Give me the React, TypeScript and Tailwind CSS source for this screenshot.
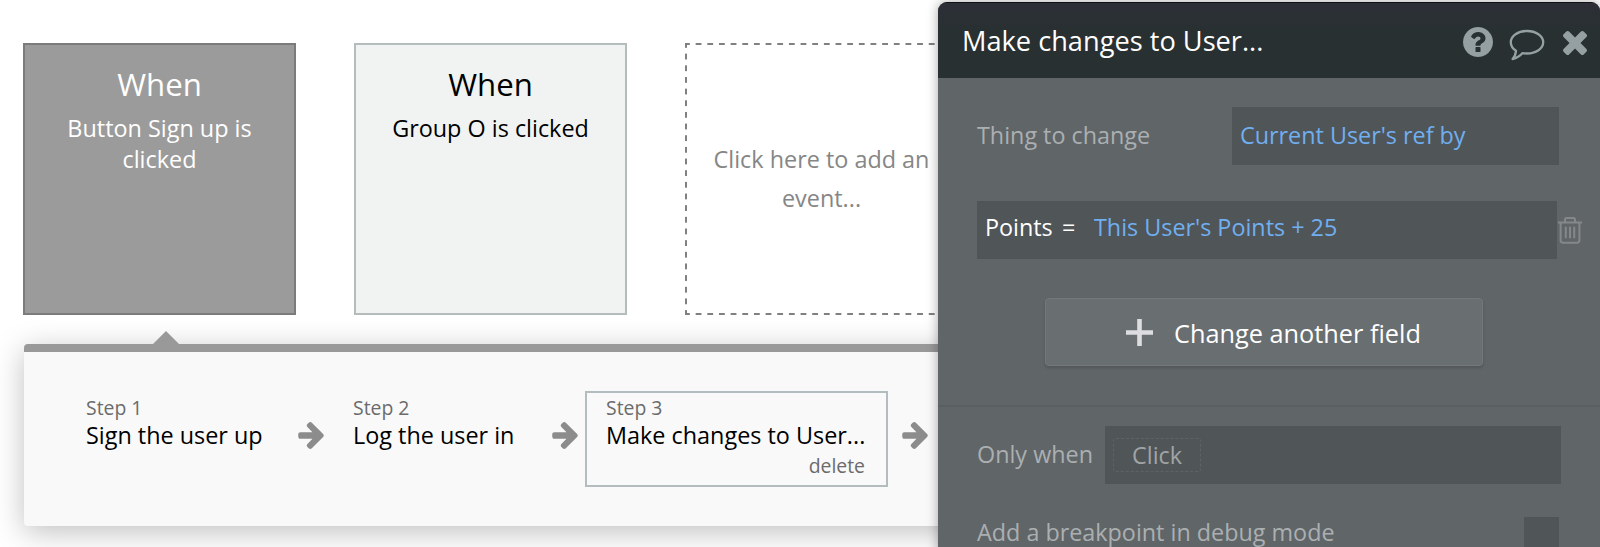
import React from 'react';

interface StepProps {
    label: string;
    name: string;
}

const ArrowIcon: React.FC<{ className?: string }> = ({ className }) => (
    <svg viewBox="64 181 1472 1558" className={`w-[26px] h-[27px] shrink-0 ${className ?? ''}`} fill="#8c8c8c">
        <path d="M1536 960q0 54-37 91l-651 651q-39 37-91 37-51 0-90-37l-75-75q-38-38-38-91t38-91l293-293H181q-52 0-84.500-37.500T64 1024V896q0-53 32.500-90.500T181 768h704L592 474q-38-36-38-90t38-90l75-75q38-38 90-38 53 0 91 38l651 651q37 35 37 90z" />
    </svg>
);

const HelpIcon = () => (
    <svg viewBox="0 0 1536 1536" className="w-[30px] h-[30px]" fill="#94a0a2">
        <path d="M896 1248v-192q0-14-9-23t-23-9H672q-14 0-23 9t-9 23v192q0 14 9 23t23 9h192q14 0 23-9t9-23zm256-672q0-88-55.500-163T958 297t-170-41q-243 0-371 213-15 24 8 42l132 100q7 6 19 6 16 0 25-12 53-68 86-92 34-24 86-24 48 0 85.500 26t37.500 59q0 38-20 61t-68 45q-63 28-115.500 86.500T640 892v36q0 14 9 23t23 9h192q14 0 23-9t9-23q0-19 21.500-49.500T972 829q32-18 49-28.500t46-35 44.500-48 28-60.500 12.500-81zm384 192q0 209-103 385.500T1153.500 1433 768 1536t-385.500-103T103 1153.500 0 768t103-385.500T382.500 103 768 0t385.500 103T1433 382.500 1536 768z" />
    </svg>
);

const CommentIcon = () => (
    <svg viewBox="0 0 36 32" className="w-[36px] h-[32px]" fill="none" stroke="#94a0a2" strokeWidth="2.3" strokeLinejoin="round">
        <path d="M18 2C27 2 34.200 7 34.200 13.200C34.200 19.500 27 24.500 18 24.500C16.500 24.500 15 24.400 13.600 24.100C11 27.100 7.500 29.200 3.600 30C5.600 28 6.600 25.500 7 21.800C3.700 19.600 1.800 16.500 1.800 13.200C1.800 7 9 2 18 2Z" />
    </svg>
);

const CloseIcon = () => (
    <svg viewBox="302 366 1188 1188" className="w-[24px] h-[24px]" fill="#94a0a2">
        <path d="M1490 1322q0 40-28 68l-136 136q-28 28-68 28t-68-28l-294-294-294 294q-28 28-68 28t-68-28l-136-136q-28-28-28-68t28-68l294-294-294-294q-28-28-28-68t28-68l136-136q28-28 68-28t68 28l294 294 294-294q28-28 68-28t68 28l136 136q28 28 28 68t-28 68l-294 294 294 294q28 28 28 68z" />
    </svg>
);

const TrashIcon = () => (
    <svg viewBox="0 0 24 27" className="w-[24px] h-[27px]" fill="none" stroke="#84888b" strokeWidth="2">
        <path d="M0 5.500H24M7 5.300V2.700Q7 1 8.700 1H15.300Q17 1 17 2.700V5.300M2.600 5.500V23.300Q2.600 25.700 4.800 25.700H19.200Q21.400 25.700 21.400 23.300V5.500" />
        <path d="M7.800 9.800V21.300M12 9.800V21.300M16.200 9.800V21.300" />
    </svg>
);

const Step: React.FC<StepProps> = ({ label, name }) => (
    <>
        <div className="text-[19.400px] leading-[26px] text-[#6b6b6b]">{label}</div>
        <div className="-mt-px mb-px text-[23.400px] leading-[30px] text-black">{name}</div>
    </>
);

const EventCards = () => (
    <div className="flex gap-[58px] pt-[43px] pl-[23px] text-center">
        <div className="w-[273px] h-[272px] shrink-0 border-2 border-[#7b7b7b] bg-[#9b9b9b] text-white">
            <div className="mt-[18px] text-[31.200px] leading-[42px]">When</div>
            <div className="mt-[8px] px-8 text-[23.400px] leading-[31px]">Button Sign up is clicked</div>
        </div>
        <div className="w-[273px] h-[272px] shrink-0 border-2 border-[#b4bcbc] bg-[#f0f3f2] text-black">
            <div className="mt-[18px] text-[31.200px] leading-[42px]">When</div>
            <div className="mt-[8px] text-[23.400px] leading-[31px]">Group O is clicked</div>
        </div>
        <div className="w-[273px] h-[272px] shrink-0 bg-[linear-gradient(90deg,#808080_6px,transparent_6px),linear-gradient(90deg,#808080_6px,transparent_6px),linear-gradient(180deg,#808080_6px,transparent_6px)] [background-size:11.67px_2px,11.67px_2px,2px_11.67px] [background-position:-1px_0,-1px_100%,0_-1px] [background-repeat:repeat-x,repeat-x,repeat-y] pt-[97px] text-[23.400px] leading-[39px] text-[#868686]">
            Click here to add an<br />event...
        </div>
    </div>
);

const StepsPanel = () => (
    <div className="relative mt-[29px] ml-[24px] h-[182px] w-[1100px] rounded-[4px] border-t-8 border-[#999999] bg-[#f9f9f9] shadow-[0_6px_30px_rgba(0,0,0,0.25)]">
        <svg viewBox="0 0 28 14" className="absolute left-[128px] top-[-21px] w-[28px] h-[14px]" fill="#999999">
            <path d="M0 14L14 0L28 14Z" />
        </svg>
        <div className="flex items-start whitespace-nowrap pt-[43px] pl-[62px]">
            <div className="w-[212px]"><Step label="Step 1" name="Sign the user up" /></div>
            <ArrowIcon className="mt-[27px]" />
            <div className="ml-[29px] w-[199px]"><Step label="Step 2" name="Log the user in" /></div>
            <ArrowIcon className="mt-[27px]" />
            <div className="-mt-[4px] ml-[7px] h-[96px] w-[303px] border-2 border-[#b3bcbf] pl-[19px] pr-[21px] pt-[2px]">
                <Step label="Step 3" name="Make changes to User..." />
                <div className="text-right text-[19.400px] leading-[30px] text-[#6b6b6b]">delete</div>
            </div>
            <ArrowIcon className="mt-[27px] ml-[14px]" />
        </div>
    </div>
);

const PropertyEditor = () => (
    <div className="relative h-[560px] w-[662px] shrink-0 mt-[2px] overflow-hidden whitespace-nowrap rounded-[9px] bg-[#606568] text-[23.350px] leading-[32px] text-[#abafb1] shadow-[0_0_12px_rgba(0,0,0,0.35)]">
        <div className="flex h-[76px] items-center border-t border-[#101214] bg-linear-to-b from-[#2c2f36] to-[#283031] to-40% pl-[24px] pr-[13px]">
            <div className="flex-1 text-[27.200px] leading-[36px] text-white">Make changes to User...</div>
            <div className="mt-[3px]"><HelpIcon /></div>
            <div className="ml-[16px] mt-[8px]"><CommentIcon /></div>
            <div className="ml-[18px] mt-[5px]"><CloseIcon /></div>
        </div>
        <div className="mt-[29px] ml-[39px] flex h-[58px] items-center">
            <div className="-mt-[2px] w-[255px]">Thing to change</div>
            <div className="flex h-[58px] w-[327px] items-center bg-[#505558] pl-[8px] pb-[2px] text-[#70aff0]">Current User's ref by</div>
        </div>
        <div className="mt-[36px] ml-[39px] flex h-[58px] items-center">
            <div className="flex h-[58px] w-[580px] bg-[#505558] pl-[8px] pt-[10px]">
                <div className="w-[77px] text-white">Points</div>
                <div className="w-[32px] text-white">=</div>
                <div className="text-[#70aff0]">This User's Points + 25</div>
            </div>
            <div className="mt-px ml-px"><TrashIcon /></div>
        </div>
        <div className="mt-[39px] ml-[107px] flex h-[68px] w-[438px] items-center rounded-[4px] border border-[#73787b] bg-[#696e71] pl-[80px] text-[25.300px] text-white shadow-[0_2px_3px_rgba(0,0,0,0.15)]">
            <svg viewBox="0 0 27 27" className="mr-[21px] w-[27px] h-[27px]" stroke="#dddddf" strokeWidth="4.600">
                <path d="M13.500 0V27M0 13.500H27" />
            </svg>
            <div className="mt-px">Change another field</div>
        </div>
        <div className="mt-[39px] h-[2px] bg-[#5a5f62]" />
        <div className="mt-[19px] ml-[39px] flex h-[58px] items-center">
            <div className="-mt-[2px] w-[128px]">Only when</div>
            <div className="flex h-[58px] w-[456px] items-center bg-[#505558] pl-[8px]">
                <div className="h-[34px] w-[88px] rounded-[3px] border border-dashed border-[#5e6366] text-center leading-[32px] text-[#a0a4a6]">Click</div>
            </div>
        </div>
        <div className="mt-[33px] ml-[39px] flex">
            <div className="-mt-px w-[547px]">Add a breakpoint in debug mode</div>
            <div className="h-[35px] w-[35px] bg-[#505558]" />
        </div>
    </div>
);

const App: React.FC = () => {
    return (
        <div className="flex h-[547px] w-[1600px] overflow-hidden bg-white font-['Open_Sans',sans-serif]">
            <div className="h-[547px] w-[938px] shrink-0 overflow-hidden">
                <EventCards />
                <StepsPanel />
            </div>
            <PropertyEditor />
        </div>
    );
};

export default App;
